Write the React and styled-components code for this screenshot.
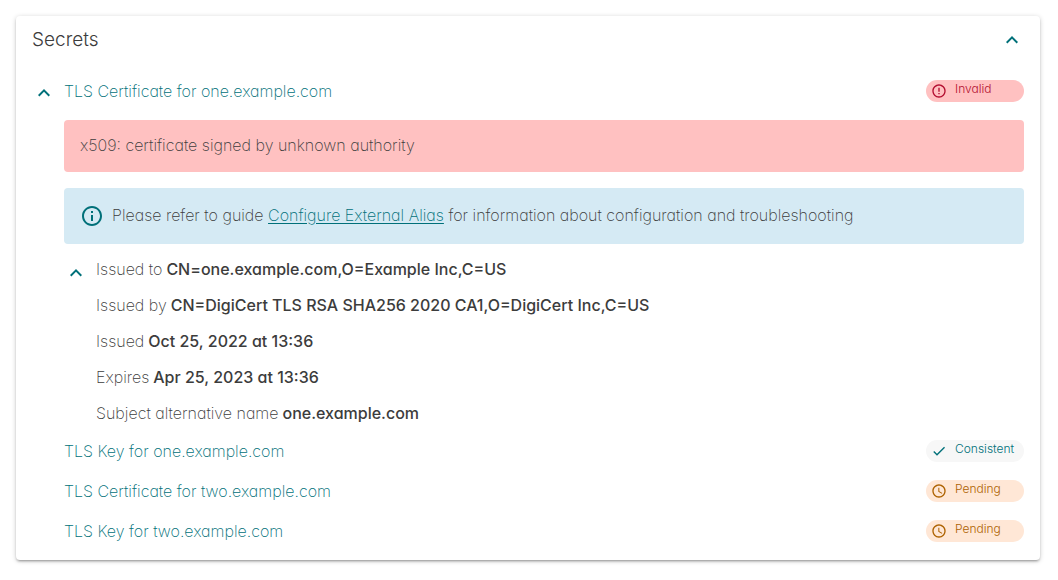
import React from "react";
import styled, { createGlobalStyle } from "styled-components";
import {
  MdExpandLess,
  MdErrorOutline,
  MdInfoOutline,
  MdCheck,
  MdAccessTime,
} from "react-icons/md";

const GlobalStyle = createGlobalStyle`
  *, *::before, *::after { box-sizing: border-box; }
  body {
    margin: 0;
    background: #fff;
    color: #3c3c3c;
    font-family: Inter, "Noto Sans", sans-serif;
    font-feature-settings: "cv11" 1;
    font-size: 16px;
    font-weight: 250;
    line-height: 20px;
  }
`;

const Page = styled.main`
  padding: 16px 18px 16px 16px;
`;

const Card = styled.section`
  padding: 0 16px 8px;
  border-radius: 4px;
  background: #fff;
  box-shadow: 0 1px 5px rgba(0, 0, 0, 0.2), 0 2px 2px rgba(0, 0, 0, 0.14),
    0 3px 1px -2px rgba(0, 0, 0, 0.12);
`;

const CardHeader = styled.header`
  display: flex;
  align-items: center;
  justify-content: space-between;
  height: 48px;
  margin-bottom: 8px;
`;

const Title = styled.h2`
  margin: 0;
  font-size: 19px;
  font-weight: 300;
  line-height: 24px;
`;

const ToggleButton = styled.button`
  display: flex;
  flex: none;
  padding: 0;
  border: 0;
  background: none;
  color: #007079;
  font-size: 24px;
  cursor: pointer;
`;

const RowToggle = styled(ToggleButton)`
  padding-top: 2px;
`;

const SecretList = styled.ul`
  margin: 0;
  padding: 0;
  list-style: none;
`;

const SecretRow = styled.div`
  display: grid;
  grid-template-columns: 24px 1fr auto;
  column-gap: 8px;
  align-items: center;
  height: 40px;
`;

const SecretName = styled.button`
  grid-column: 2;
  justify-self: start;
  padding: 0 0 2px;
  border: 0;
  background: none;
  color: #007079;
  font: inherit;
  font-feature-settings: inherit;
  cursor: pointer;
`;

const chipTones = {
  invalid: { background: "#ffc1c1", color: "#b30d2f" },
  consistent: { background: "#f7f7f7", color: "#007079" },
  pending: { background: "#ffe7d6", color: "#ad6200" },
};

const Chip = styled.span`
  display: flex;
  align-items: center;
  gap: 8px;
  width: 98px;
  height: 22px;
  margin-bottom: 2px;
  padding: 0 5px;
  border-radius: 11px;
  background: ${({ $tone }) => chipTones[$tone].background};
  color: ${({ $tone }) => chipTones[$tone].color};
  font-size: 16px;
`;

const ChipText = styled.span`
  padding-bottom: 4px;
  font-size: 12px;
  font-weight: 300;
  line-height: 16px;
`;

const SecretBody = styled.div`
  padding: 8px 0 0 32px;
`;

const Alert = styled.div`
  display: flex;
  align-items: center;
  gap: 8px;
  padding: ${({ $info }) => ($info ? "16px" : "15px 16px 17px")};
  border-radius: 4px;
  background: ${({ $info }) => ($info ? "#d5eaf4" : "#ffc1c1")};

  & + & {
    margin-top: 16px;
  }

  svg {
    flex: none;
    color: #007079;
    font-size: 24px;
  }
`;

const AlertText = styled.span`
  padding-bottom: 2px;
`;

const GuideLink = styled.a`
  color: #007079;
  text-underline-offset: 2px;
`;

const Certificate = styled.div`
  display: flex;
  gap: 8px;
  padding-top: 8px;
`;

const CertificateToggle = styled(ToggleButton)`
  align-self: flex-start;
  padding-top: 9px;
`;

const Facts = styled.dl`
  margin: 0;
`;

const Fact = styled.div`
  display: flex;
  gap: 4px;
  padding-bottom: 2px;
  line-height: 34px;

  dd {
    margin: 0;
    font-weight: 500;
  }
`;

const facts = [
  ["Issued to", "CN=one.example.com,O=Example Inc,C=US"],
  ["Issued by", "CN=DigiCert TLS RSA SHA256 2020 CA1,O=DigiCert Inc,C=US"],
  ["Issued", "Oct 25, 2022 at 13:36"],
  ["Expires", "Apr 25, 2023 at 13:36"],
  ["Subject alternative name", "one.example.com"],
];

const chipContent = {
  invalid: [MdErrorOutline, "Invalid"],
  consistent: [MdCheck, "Consistent"],
  pending: [MdAccessTime, "Pending"],
};

function StatusChip({ status }) {
  const [Icon, label] = chipContent[status];
  return (
    <Chip $tone={status}>
      <Icon aria-hidden="true" />
      <ChipText>{label}</ChipText>
    </Chip>
  );
}

function Secret({ name, status, expanded, children }) {
  return (
    <li>
      <SecretRow>
        {expanded && (
          <RowToggle aria-label={`Collapse ${name}`} aria-expanded="true">
            <MdExpandLess />
          </RowToggle>
        )}
        <SecretName>{name}</SecretName>
        <StatusChip status={status} />
      </SecretRow>
      {children}
    </li>
  );
}

export default function App() {
  return (
    <Page>
      <GlobalStyle />
      <Card>
        <CardHeader>
          <Title>Secrets</Title>
          <ToggleButton aria-label="Collapse secrets" aria-expanded="true">
            <MdExpandLess />
          </ToggleButton>
        </CardHeader>
        <SecretList>
          <Secret name="TLS Certificate for one.example.com" status="invalid" expanded>
            <SecretBody>
              <Alert>x509: certificate signed by unknown authority</Alert>
              <Alert $info>
                <MdInfoOutline aria-hidden="true" />
                <AlertText>
                  Please refer to guide <GuideLink href="#guide">Configure External Alias</GuideLink>{" "}
                  for information about configuration and troubleshooting
                </AlertText>
              </Alert>
              <Certificate>
                <CertificateToggle aria-label="Collapse certificate" aria-expanded="true">
                  <MdExpandLess />
                </CertificateToggle>
                <Facts>
                  {facts.map(([term, value]) => (
                    <Fact key={term}>
                      <dt>{term}</dt>
                      <dd>{value}</dd>
                    </Fact>
                  ))}
                </Facts>
              </Certificate>
            </SecretBody>
          </Secret>
          <Secret name="TLS Key for one.example.com" status="consistent" />
          <Secret name="TLS Certificate for two.example.com" status="pending" />
          <Secret name="TLS Key for two.example.com" status="pending" />
        </SecretList>
      </Card>
    </Page>
  );
}
